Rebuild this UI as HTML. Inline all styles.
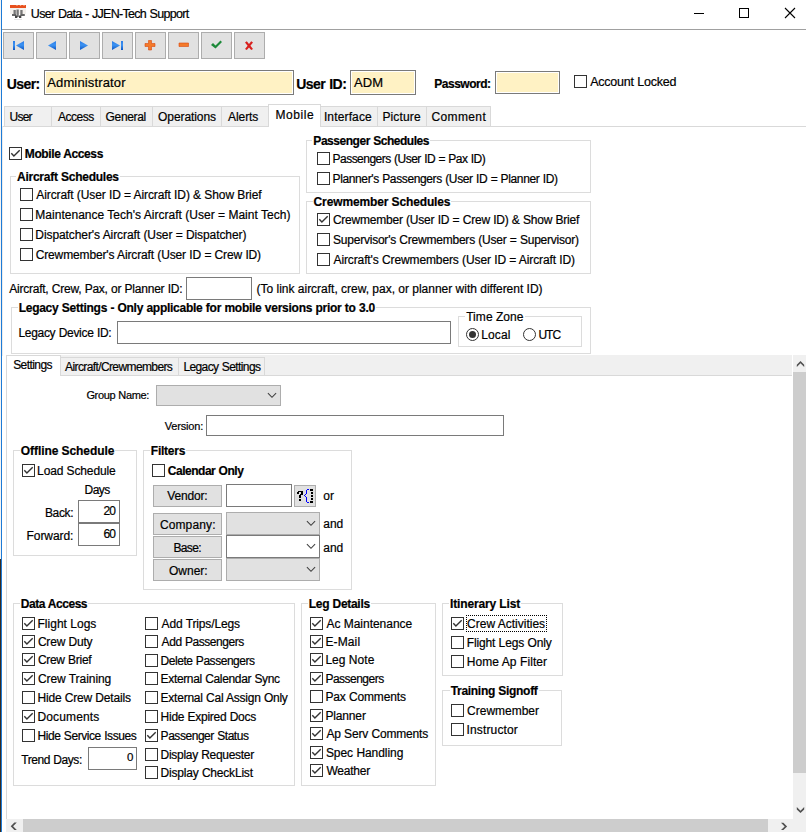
<!DOCTYPE html>
<html><head><meta charset="utf-8"><style>
html,body{margin:0;padding:0;}
body{width:806px;height:832px;overflow:hidden;position:relative;background:#fff;font-family:"Liberation Sans", sans-serif;}
.t{position:absolute;white-space:nowrap;font-family:"Liberation Sans", sans-serif;color:#000;-webkit-text-stroke:0.2px #000;}
</style></head><body>
<div style="position:absolute;left:0px;top:0px;width:1px;height:832px;box-sizing:border-box;background:#f4f4f4;"></div>
<div style="position:absolute;left:1px;top:0px;width:1px;height:832px;box-sizing:border-box;background:#1e7bd6;"></div>
<div style="position:absolute;left:0px;top:559px;width:1px;height:273px;box-sizing:border-box;background:#352b22;"></div>
<svg style="position:absolute;left:0;top:0" width="30" height="24">
<rect x="10" y="5" width="16" height="3" fill="#e8501e"/>
<path d="M16 5l1 1 1-1zM19.5 5l1 1 1-1zM23 5l1 1 1-1z" fill="#f7c0a0"/>
<rect x="10" y="8" width="16" height="6" fill="#f4f1ed"/>
<path d="M13.5 10h2.3v4h-2.3z M16.5 9.5h2.3v7.5h-2.3z M20.3 10h2.3v4h-2.3z" fill="#777"/>
<path d="M12 14h4v2h-4z M20.3 14h4.5v2h-4.5z" fill="#666"/>
<path d="M15 15.5h2.3v2.5h-2.3z M19 15.5h2.3v2.5h-2.3z" fill="#444"/>
<path d="M14 19h8v1h-8z" fill="#e6e6e6"/>
</svg>
<div class="t" style="left:30.82px;top:8px;font-size:12.5px;line-height:12.5px;color:#000;letter-spacing:-0.697px;word-spacing:0.697px;">User Data - JJEN-Tech Support</div>
<div style="position:absolute;left:694px;top:13px;width:10px;height:1px;box-sizing:border-box;background:#000;"></div>
<div style="position:absolute;left:739px;top:8px;width:10px;height:10px;box-sizing:border-box;border:1px solid #000;"></div>
<svg style="position:absolute;left:784px;top:7px" width="12" height="12"><path d="M1 1L11 11M11 1L1 11" stroke="#000" stroke-width="1.1"/></svg>
<div style="position:absolute;left:2px;top:29px;width:804px;height:1px;box-sizing:border-box;background:#a0a0a0;"></div>
<div style="position:absolute;left:3px;top:32px;width:31px;height:27px;box-sizing:border-box;border:1px solid #adadad;background:#e1e1e1;"></div>
<svg style="position:absolute;left:3px;top:32px" width="31" height="27"><defs><linearGradient id="bg" x1="0" y1="0" x2="0" y2="1"><stop offset="0" stop-color="#2a7ce8"/><stop offset="0.45" stop-color="#3d93f2"/><stop offset="1" stop-color="#0b55c4"/></linearGradient></defs><path d="M10 9h2v9h-2z M21 9v9l-8-4.5z" fill="url(#bg)"/></svg>
<div style="position:absolute;left:36px;top:32px;width:31px;height:27px;box-sizing:border-box;border:1px solid #adadad;background:#e1e1e1;"></div>
<svg style="position:absolute;left:36px;top:32px" width="31" height="27"><defs><linearGradient id="bg" x1="0" y1="0" x2="0" y2="1"><stop offset="0" stop-color="#2a7ce8"/><stop offset="0.45" stop-color="#3d93f2"/><stop offset="1" stop-color="#0b55c4"/></linearGradient></defs><path d="M20 9v9l-8-4.5z" fill="url(#bg)"/></svg>
<div style="position:absolute;left:69px;top:32px;width:31px;height:27px;box-sizing:border-box;border:1px solid #adadad;background:#e1e1e1;"></div>
<svg style="position:absolute;left:69px;top:32px" width="31" height="27"><defs><linearGradient id="bg" x1="0" y1="0" x2="0" y2="1"><stop offset="0" stop-color="#2a7ce8"/><stop offset="0.45" stop-color="#3d93f2"/><stop offset="1" stop-color="#0b55c4"/></linearGradient></defs><path d="M11 9v9l8-4.5z" fill="url(#bg)"/></svg>
<div style="position:absolute;left:102px;top:32px;width:31px;height:27px;box-sizing:border-box;border:1px solid #adadad;background:#e1e1e1;"></div>
<svg style="position:absolute;left:102px;top:32px" width="31" height="27"><defs><linearGradient id="bg" x1="0" y1="0" x2="0" y2="1"><stop offset="0" stop-color="#2a7ce8"/><stop offset="0.45" stop-color="#3d93f2"/><stop offset="1" stop-color="#0b55c4"/></linearGradient></defs><path d="M19 9h2v9h-2z M10 9v9l8-4.5z" fill="url(#bg)"/></svg>
<div style="position:absolute;left:135px;top:32px;width:31px;height:27px;box-sizing:border-box;border:1px solid #adadad;background:#e1e1e1;"></div>
<svg style="position:absolute;left:135px;top:32px" width="31" height="27"><defs><linearGradient id="bg" x1="0" y1="0" x2="0" y2="1"><stop offset="0" stop-color="#2a7ce8"/><stop offset="0.45" stop-color="#3d93f2"/><stop offset="1" stop-color="#0b55c4"/></linearGradient></defs><path d="M13.5 8.5h3v3h3.5v3h-3.5v3.5h-3v-3.5h-3.5v-3h3.5z" fill="#f47a2a" stroke="#d9480f" stroke-width="0.6"/></svg>
<div style="position:absolute;left:168px;top:32px;width:31px;height:27px;box-sizing:border-box;border:1px solid #adadad;background:#e1e1e1;"></div>
<svg style="position:absolute;left:168px;top:32px" width="31" height="27"><defs><linearGradient id="bg" x1="0" y1="0" x2="0" y2="1"><stop offset="0" stop-color="#2a7ce8"/><stop offset="0.45" stop-color="#3d93f2"/><stop offset="1" stop-color="#0b55c4"/></linearGradient></defs><path d="M11 11h9.5v3.5h-9.5z" fill="#f47a2a" stroke="#d9480f" stroke-width="0.6"/></svg>
<div style="position:absolute;left:201px;top:32px;width:31px;height:27px;box-sizing:border-box;border:1px solid #adadad;background:#e1e1e1;"></div>
<svg style="position:absolute;left:201px;top:32px" width="31" height="27"><defs><linearGradient id="bg" x1="0" y1="0" x2="0" y2="1"><stop offset="0" stop-color="#2a7ce8"/><stop offset="0.45" stop-color="#3d93f2"/><stop offset="1" stop-color="#0b55c4"/></linearGradient></defs><path d="M10 13l2-2 2.5 2.5 5-5 1.5 1.5-6.5 6.5z" fill="#1d8a3a"/></svg>
<div style="position:absolute;left:234px;top:32px;width:31px;height:27px;box-sizing:border-box;border:1px solid #adadad;background:#e1e1e1;"></div>
<svg style="position:absolute;left:234px;top:32px" width="31" height="27"><defs><linearGradient id="bg" x1="0" y1="0" x2="0" y2="1"><stop offset="0" stop-color="#2a7ce8"/><stop offset="0.45" stop-color="#3d93f2"/><stop offset="1" stop-color="#0b55c4"/></linearGradient></defs><path d="M11 10.5l1.8-1.2 2.2 2.7 2.2-2.7 1.8 1.2-2.6 3.2 2.6 3.2-1.8 1.2-2.2-2.7-2.2 2.7-1.8-1.2 2.6-3.2z" fill="#d8201e"/></svg>
<div class="t" style="left:6.65px;top:77px;font-size:14px;line-height:14px;font-weight:bold;color:#000;letter-spacing:-0.537px;word-spacing:0.537px;">User:</div>
<div style="position:absolute;left:44px;top:70px;width:250px;height:25px;box-sizing:border-box;border:1px solid #7a7a7a;background:#fff2c4;box-shadow:inset 0 0 0 1px #fff;"></div>
<div class="t" style="left:47.20px;top:76px;font-size:13px;line-height:13px;color:#000;letter-spacing:0.144px;word-spacing:-0.144px;">Administrator</div>
<div class="t" style="left:296.25px;top:77px;font-size:14px;line-height:14px;font-weight:bold;color:#000;letter-spacing:-0.521px;word-spacing:0.521px;">User ID:</div>
<div style="position:absolute;left:350px;top:70px;width:66px;height:25px;box-sizing:border-box;border:1px solid #7a7a7a;background:#fff2c4;box-shadow:inset 0 0 0 1px #fff;"></div>
<div class="t" style="left:354.00px;top:76px;font-size:13px;line-height:13px;color:#000;letter-spacing:0.125px;word-spacing:-0.125px;">ADM</div>
<div class="t" style="left:434.25px;top:78px;font-size:12px;line-height:12px;font-weight:bold;color:#000;letter-spacing:-0.484px;word-spacing:0.484px;">Password:</div>
<div style="position:absolute;left:495px;top:71px;width:65px;height:23px;box-sizing:border-box;border:1px solid #7a7a7a;background:#fff2c4;box-shadow:inset 0 0 0 1px #fff;"></div>
<div style="position:absolute;left:574px;top:75px;width:13px;height:13px"><svg width="13" height="13" style="position:absolute;left:0;top:0"><rect x="0.5" y="0.5" width="12" height="12" fill="#fff" stroke="#333"/></svg></div>
<div class="t" style="left:590.20px;top:76px;font-size:12.5px;line-height:12.5px;color:#000;letter-spacing:-0.227px;word-spacing:0.227px;">Account Locked</div>
<div style="position:absolute;left:2px;top:126px;width:804px;height:1px;box-sizing:border-box;background:#d9d9d9;"></div>
<div style="position:absolute;left:2px;top:126px;width:1px;height:230px;box-sizing:border-box;background:#ececec;"></div>
<div style="position:absolute;left:4px;top:106px;width:48px;height:21px;box-sizing:border-box;border:1px solid #d9d9d9;background:#f0f0f0;"></div>
<div class="t" style="left:9.53px;top:111px;font-size:12px;line-height:12px;color:#000;letter-spacing:-0.758px;word-spacing:0.758px;">User</div>
<div style="position:absolute;left:51px;top:106px;width:50px;height:21px;box-sizing:border-box;border:1px solid #d9d9d9;background:#f0f0f0;"></div>
<div class="t" style="left:58.00px;top:111px;font-size:12px;line-height:12px;color:#000;letter-spacing:-0.490px;word-spacing:0.490px;">Access</div>
<div style="position:absolute;left:100px;top:106px;width:53px;height:21px;box-sizing:border-box;border:1px solid #d9d9d9;background:#f0f0f0;"></div>
<div class="t" style="left:105.58px;top:111px;font-size:12px;line-height:12px;color:#000;letter-spacing:-0.342px;word-spacing:0.342px;">General</div>
<div style="position:absolute;left:152px;top:106px;width:70px;height:21px;box-sizing:border-box;border:1px solid #d9d9d9;background:#f0f0f0;"></div>
<div class="t" style="left:158.10px;top:111px;font-size:12px;line-height:12px;color:#000;letter-spacing:-0.086px;word-spacing:0.086px;">Operations</div>
<div style="position:absolute;left:221px;top:106px;width:48px;height:21px;box-sizing:border-box;border:1px solid #d9d9d9;background:#f0f0f0;"></div>
<div class="t" style="left:228.10px;top:111px;font-size:12px;line-height:12px;color:#000;letter-spacing:-0.090px;word-spacing:0.090px;">Alerts</div>
<div style="position:absolute;left:268px;top:104px;width:53px;height:23px;box-sizing:border-box;border:1px solid #d9d9d9;border-bottom:none;background:#fff;"></div>
<div class="t" style="left:275.50px;top:109px;font-size:12px;line-height:12px;color:#000;letter-spacing:0.550px;word-spacing:-0.550px;">Mobile</div>
<div style="position:absolute;left:320px;top:106px;width:58px;height:21px;box-sizing:border-box;border:1px solid #d9d9d9;background:#f0f0f0;"></div>
<div class="t" style="left:323.88px;top:111px;font-size:12px;line-height:12px;color:#000;letter-spacing:0.150px;word-spacing:-0.150px;">Interface</div>
<div style="position:absolute;left:377px;top:106px;width:50px;height:21px;box-sizing:border-box;border:1px solid #d9d9d9;background:#f0f0f0;"></div>
<div class="t" style="left:382.40px;top:111px;font-size:12px;line-height:12px;color:#000;letter-spacing:0.142px;word-spacing:-0.142px;">Picture</div>
<div style="position:absolute;left:426px;top:106px;width:65px;height:21px;box-sizing:border-box;border:1px solid #d9d9d9;background:#f0f0f0;"></div>
<div class="t" style="left:431.57px;top:111px;font-size:12px;line-height:12px;color:#000;letter-spacing:0.358px;word-spacing:-0.358px;">Comment</div>
<div style="position:absolute;left:9px;top:147px;width:13px;height:13px"><svg width="13" height="13" style="position:absolute;left:0;top:0"><rect x="0.5" y="0.5" width="12" height="12" fill="#fff" stroke="#333"/><polyline points="2.3,6.3 4.9,9.1 10.7,3.3" fill="none" stroke="#333" stroke-width="1.4"/></svg></div>
<div class="t" style="left:24.85px;top:148px;font-size:12px;line-height:12px;font-weight:bold;color:#000;letter-spacing:-0.405px;word-spacing:0.405px;">Mobile Access</div>
<div style="position:absolute;left:10px;top:176px;width:290px;height:98px;box-sizing:border-box;border:1px solid #dcdcdc;"></div>
<div class="t" style="left:17.05px;top:171px;font-size:12px;line-height:12px;font-weight:bold;color:#000;letter-spacing:-0.255px;word-spacing:0.255px;background:#fff;padding:0 1px 0 1px;margin-left:-1px;">Aircraft Schedules</div>
<div style="position:absolute;left:20px;top:188px;width:13px;height:13px"><svg width="13" height="13" style="position:absolute;left:0;top:0"><rect x="0.5" y="0.5" width="12" height="12" fill="#fff" stroke="#333"/></svg></div>
<div class="t" style="left:36.30px;top:189px;font-size:12px;line-height:12px;color:#000;letter-spacing:-0.106px;word-spacing:0.106px;">Aircraft (User ID = Aircraft ID) &amp; Show Brief</div>
<div style="position:absolute;left:20px;top:208px;width:13px;height:13px"><svg width="13" height="13" style="position:absolute;left:0;top:0"><rect x="0.5" y="0.5" width="12" height="12" fill="#fff" stroke="#333"/></svg></div>
<div class="t" style="left:35.30px;top:209px;font-size:12px;line-height:12px;color:#000;letter-spacing:0.020px;word-spacing:-0.020px;">Maintenance Tech's Aircraft (User = Maint Tech)</div>
<div style="position:absolute;left:20px;top:228px;width:13px;height:13px"><svg width="13" height="13" style="position:absolute;left:0;top:0"><rect x="0.5" y="0.5" width="12" height="12" fill="#fff" stroke="#333"/></svg></div>
<div class="t" style="left:35.30px;top:229px;font-size:12px;line-height:12px;color:#000;letter-spacing:-0.079px;word-spacing:0.079px;">Dispatcher's Aircraft (User = Dispatcher)</div>
<div style="position:absolute;left:20px;top:248px;width:13px;height:13px"><svg width="13" height="13" style="position:absolute;left:0;top:0"><rect x="0.5" y="0.5" width="12" height="12" fill="#fff" stroke="#333"/></svg></div>
<div class="t" style="left:35.67px;top:249px;font-size:12px;line-height:12px;color:#000;letter-spacing:-0.133px;word-spacing:0.133px;">Crewmember's Aircraft (User ID = Crew ID)</div>
<div style="position:absolute;left:306px;top:140px;width:285px;height:53px;box-sizing:border-box;border:1px solid #dcdcdc;"></div>
<div class="t" style="left:313.35px;top:135px;font-size:12px;line-height:12px;font-weight:bold;color:#000;letter-spacing:-0.469px;word-spacing:0.469px;background:#fff;padding:0 1px 0 1px;margin-left:-1px;">Passenger Schedules</div>
<div style="position:absolute;left:317px;top:152px;width:13px;height:13px"><svg width="13" height="13" style="position:absolute;left:0;top:0"><rect x="0.5" y="0.5" width="12" height="12" fill="#fff" stroke="#333"/></svg></div>
<div class="t" style="left:332.50px;top:153px;font-size:12px;line-height:12px;color:#000;letter-spacing:-0.515px;word-spacing:0.515px;">Passengers (User ID = Pax ID)</div>
<div style="position:absolute;left:317px;top:172px;width:13px;height:13px"><svg width="13" height="13" style="position:absolute;left:0;top:0"><rect x="0.5" y="0.5" width="12" height="12" fill="#fff" stroke="#333"/></svg></div>
<div class="t" style="left:332.50px;top:173px;font-size:12px;line-height:12px;color:#000;letter-spacing:-0.367px;word-spacing:0.367px;">Planner's Passengers (User ID = Planner ID)</div>
<div style="position:absolute;left:306px;top:201px;width:285px;height:73px;box-sizing:border-box;border:1px solid #dcdcdc;"></div>
<div class="t" style="left:313.60px;top:196px;font-size:12px;line-height:12px;font-weight:bold;color:#000;letter-spacing:-0.139px;word-spacing:0.139px;background:#fff;padding:0 1px 0 1px;margin-left:-1px;">Crewmember Schedules</div>
<div style="position:absolute;left:317px;top:213px;width:13px;height:13px"><svg width="13" height="13" style="position:absolute;left:0;top:0"><rect x="0.5" y="0.5" width="12" height="12" fill="#fff" stroke="#333"/><polyline points="2.3,6.3 4.9,9.1 10.7,3.3" fill="none" stroke="#333" stroke-width="1.4"/></svg></div>
<div class="t" style="left:332.88px;top:214px;font-size:12px;line-height:12px;color:#000;letter-spacing:-0.215px;word-spacing:0.215px;">Crewmember (User ID = Crew ID) &amp; Show Brief</div>
<div style="position:absolute;left:317px;top:233px;width:13px;height:13px"><svg width="13" height="13" style="position:absolute;left:0;top:0"><rect x="0.5" y="0.5" width="12" height="12" fill="#fff" stroke="#333"/></svg></div>
<div class="t" style="left:333.00px;top:234px;font-size:12px;line-height:12px;color:#000;letter-spacing:-0.221px;word-spacing:0.221px;">Supervisor's Crewmembers (User = Supervisor)</div>
<div style="position:absolute;left:317px;top:253px;width:13px;height:13px"><svg width="13" height="13" style="position:absolute;left:0;top:0"><rect x="0.5" y="0.5" width="12" height="12" fill="#fff" stroke="#333"/></svg></div>
<div class="t" style="left:333.50px;top:254px;font-size:12px;line-height:12px;color:#000;letter-spacing:-0.114px;word-spacing:0.114px;">Aircraft's Crewmembers (User ID = Aircraft ID)</div>
<div class="t" style="left:9.20px;top:283px;font-size:12px;line-height:12px;color:#000;letter-spacing:-0.231px;word-spacing:0.231px;">Aircraft, Crew, Pax, or Planner ID:</div>
<div style="position:absolute;left:186px;top:277px;width:66px;height:23px;box-sizing:border-box;border:1px solid #7a7a7a;background:#fff;"></div>
<div class="t" style="left:256.55px;top:283px;font-size:12px;line-height:12px;color:#000;letter-spacing:-0.011px;word-spacing:0.011px;">(To link aircraft, crew, pax, or planner with different ID)</div>
<div style="position:absolute;left:11px;top:307px;width:580px;height:47px;box-sizing:border-box;border:1px solid #dcdcdc;"></div>
<div class="t" style="left:18.65px;top:302px;font-size:12px;line-height:12px;font-weight:bold;color:#000;letter-spacing:-0.259px;word-spacing:0.259px;background:#fff;padding:0 1px 0 1px;margin-left:-1px;">Legacy Settings - Only applicable for mobile versions prior to 3.0</div>
<div class="t" style="left:18.40px;top:327px;font-size:12px;line-height:12px;color:#000;letter-spacing:-0.296px;word-spacing:0.296px;">Legacy Device ID:</div>
<div style="position:absolute;left:117px;top:321px;width:334px;height:23px;box-sizing:border-box;border:1px solid #7a7a7a;background:#fff;"></div>
<div style="position:absolute;left:458px;top:316px;width:124px;height:31px;box-sizing:border-box;border:1px solid #dcdcdc;"></div>
<div class="t" style="left:466.15px;top:311px;font-size:12px;line-height:12px;color:#000;letter-spacing:0.068px;word-spacing:-0.068px;background:#fff;padding:0 1px 0 1px;margin-left:-1px;">Time Zone</div>
<svg style="position:absolute;left:466px;top:328px" width="13" height="13"><circle cx="6.5" cy="6.5" r="6" fill="#fff" stroke="#333"/><circle cx="6.5" cy="6.5" r="3.5" fill="#333"/></svg>
<div class="t" style="left:481.30px;top:329px;font-size:12px;line-height:12px;color:#000;letter-spacing:0.081px;word-spacing:-0.081px;">Local</div>
<svg style="position:absolute;left:523px;top:328px" width="13" height="13"><circle cx="6.5" cy="6.5" r="6" fill="#fff" stroke="#333"/></svg>
<div class="t" style="left:538.42px;top:329px;font-size:12px;line-height:12px;color:#000;letter-spacing:-0.987px;word-spacing:0.987px;">UTC</div>
<div style="position:absolute;left:6px;top:355px;width:786px;height:20px;box-sizing:border-box;background:#f0f0f0;"></div>
<div style="position:absolute;left:6px;top:375px;width:786px;height:1px;box-sizing:border-box;background:#d9d9d9;"></div>
<div style="position:absolute;left:6px;top:375px;width:1px;height:444px;box-sizing:border-box;background:#d9d9d9;"></div>
<div style="position:absolute;left:60px;top:357px;width:119px;height:19px;box-sizing:border-box;border:1px solid #d9d9d9;background:#f0f0f0;"></div>
<div class="t" style="left:65.10px;top:361px;font-size:12px;line-height:12px;color:#000;letter-spacing:-0.611px;word-spacing:0.611px;">Aircraft/Crewmembers</div>
<div style="position:absolute;left:178px;top:357px;width:87px;height:19px;box-sizing:border-box;border:1px solid #d9d9d9;background:#f0f0f0;"></div>
<div class="t" style="left:183.40px;top:361px;font-size:12px;line-height:12px;color:#000;letter-spacing:-0.600px;word-spacing:0.600px;">Legacy Settings</div>
<div style="position:absolute;left:6px;top:355px;width:55px;height:21px;box-sizing:border-box;border:1px solid #d9d9d9;border-bottom:none;background:#fff;"></div>
<div class="t" style="left:13.20px;top:359px;font-size:12px;line-height:12px;color:#000;letter-spacing:-0.571px;word-spacing:0.571px;">Settings</div>
<div style="position:absolute;left:793px;top:355px;width:13px;height:464px;box-sizing:border-box;background:#f0f0f0;"></div>
<div style="position:absolute;left:793px;top:372px;width:13px;height:401px;box-sizing:border-box;background:#cdcdcd;"></div>
<div style="position:absolute;left:6px;top:819px;width:800px;height:13px;box-sizing:border-box;background:#f0f0f0;"></div>
<div style="position:absolute;left:23px;top:819px;width:745px;height:13px;box-sizing:border-box;background:#cdcdcd;"></div>
<svg style="position:absolute;left:0;top:0" width="806" height="832"><g fill="#505050"><polygon points="800.5,361 804.2,364.7 804.2,367 800.5,363.3 796.8,367 796.8,364.7"/><polygon points="800.5,813.1 804.2,809.4 804.2,807 800.5,810.7 796.8,807 796.8,809.4"/><polygon points="787.1,826.4 783.4,822.8 781,822.8 784.7,826.4 781,830 783.4,830"/><polygon points="10.7,826.3 14.4,822.6 16.8,822.6 13.1,826.3 16.8,830 14.4,830"/></g></svg>
<div class="t" style="left:86.40px;top:390px;font-size:11px;line-height:11px;color:#000;letter-spacing:-0.336px;word-spacing:0.336px;">Group Name:</div>
<div style="position:absolute;left:156px;top:385px;width:125px;height:21px;box-sizing:border-box;border:1px solid #adadad;background:#e1e1e1;"></div>
<svg style="position:absolute;left:267px;top:392.0px" width="10" height="7"><polyline points="0.9,1.2 5,5.3 9.1,1.2" fill="none" stroke="#404040" stroke-width="1.1"/></svg>
<div class="t" style="left:164.80px;top:421px;font-size:11px;line-height:11px;color:#000;letter-spacing:-0.182px;word-spacing:0.182px;">Version:</div>
<div style="position:absolute;left:206px;top:415px;width:298px;height:21px;box-sizing:border-box;border:1px solid #7a7a7a;background:#fff;"></div>
<div style="position:absolute;left:13px;top:450px;width:124px;height:106px;box-sizing:border-box;border:1px solid #dcdcdc;"></div>
<div class="t" style="left:20.80px;top:445px;font-size:12px;line-height:12px;font-weight:bold;color:#000;letter-spacing:-0.082px;word-spacing:0.082px;background:#fff;padding:0 1px 0 1px;margin-left:-1px;">Offline Schedule</div>
<div style="position:absolute;left:22px;top:464px;width:13px;height:13px"><svg width="13" height="13" style="position:absolute;left:0;top:0"><rect x="0.5" y="0.5" width="12" height="12" fill="#fff" stroke="#333"/><polyline points="2.3,6.3 4.9,9.1 10.7,3.3" fill="none" stroke="#333" stroke-width="1.4"/></svg></div>
<div class="t" style="left:37.10px;top:465px;font-size:12px;line-height:12px;color:#000;letter-spacing:-0.136px;word-spacing:0.136px;">Load Schedule</div>
<div class="t" style="left:84.50px;top:484px;font-size:12px;line-height:12px;color:#000;letter-spacing:-0.533px;word-spacing:0.533px;">Days</div>
<div class="t" style="left:44.90px;top:507px;font-size:12px;line-height:12px;color:#000;letter-spacing:-0.319px;word-spacing:0.319px;">Back:</div>
<div class="t" style="left:26.50px;top:530px;font-size:12px;line-height:12px;color:#000;letter-spacing:-0.064px;word-spacing:0.064px;">Forward:</div>
<div style="position:absolute;left:78px;top:500px;width:42px;height:23px;box-sizing:border-box;border:1px solid #7a7a7a;background:#fff;"></div>
<div class="t" style="left:103.58px;top:505px;font-size:12px;line-height:12px;color:#000;letter-spacing:-0.950px;word-spacing:0.950px;">20</div>
<div style="position:absolute;left:78px;top:523px;width:42px;height:23px;box-sizing:border-box;border:1px solid #7a7a7a;background:#fff;"></div>
<div class="t" style="left:103.58px;top:528px;font-size:12px;line-height:12px;color:#000;letter-spacing:-0.950px;word-spacing:0.950px;">60</div>
<div style="position:absolute;left:143px;top:450px;width:209px;height:140px;box-sizing:border-box;border:1px solid #dcdcdc;"></div>
<div class="t" style="left:150.85px;top:445px;font-size:12px;line-height:12px;font-weight:bold;color:#000;letter-spacing:-0.246px;word-spacing:0.246px;background:#fff;padding:0 1px 0 1px;margin-left:-1px;">Filters</div>
<div style="position:absolute;left:152px;top:464px;width:13px;height:13px"><svg width="13" height="13" style="position:absolute;left:0;top:0"><rect x="0.5" y="0.5" width="12" height="12" fill="#fff" stroke="#333"/></svg></div>
<div class="t" style="left:167.80px;top:465px;font-size:12px;line-height:12px;font-weight:bold;color:#000;letter-spacing:-0.486px;word-spacing:0.486px;">Calendar Only</div>
<div style="position:absolute;left:153px;top:485px;width:69px;height:22px;box-sizing:border-box;border:1px solid #adadad;background:#e1e1e1;"></div>
<div class="t" style="left:167.30px;top:490px;font-size:12px;line-height:12px;color:#000;letter-spacing:-0.175px;word-spacing:0.175px;">Vendor:</div>
<div style="position:absolute;left:226px;top:484px;width:66px;height:23px;box-sizing:border-box;border:1px solid #7a7a7a;background:#fff;"></div>
<div style="position:absolute;left:294px;top:485px;width:22px;height:22px;box-sizing:border-box;border:1px solid #adadad;background:#e1e1e1;"></div>
<svg style="position:absolute;left:0;top:0" width="806" height="832" shape-rendering="crispEdges"><g fill="#000"><rect x="298" y="491" width="4" height="1"/><rect x="297" y="492" width="2" height="2"/><rect x="301" y="491" width="2" height="4"/><rect x="300" y="494" width="2" height="1"/><rect x="299" y="495" width="2" height="3"/><rect x="299" y="499" width="2" height="2"/><rect x="310" y="489" width="3" height="2"/><rect x="311" y="492" width="2" height="2"/><rect x="311" y="495" width="2" height="2"/><rect x="311" y="498" width="2" height="2"/><rect x="310" y="501" width="3" height="2"/></g><g fill="#0000ff"><rect x="307" y="489" width="2" height="1"/><rect x="306" y="490" width="1" height="4"/><rect x="305" y="494" width="1" height="1"/><rect x="304" y="495" width="1" height="1"/><rect x="305" y="496" width="1" height="1"/><rect x="306" y="497" width="1" height="5"/><rect x="307" y="502" width="2" height="1"/></g></svg>
<div class="t" style="left:323.20px;top:490px;font-size:12px;line-height:12px;color:#000;letter-spacing:0.100px;word-spacing:-0.100px;">or</div>
<div style="position:absolute;left:153px;top:513px;width:69px;height:22px;box-sizing:border-box;border:1px solid #adadad;background:#e1e1e1;"></div>
<div class="t" style="left:159.88px;top:519px;font-size:12px;line-height:12px;color:#000;letter-spacing:0.129px;word-spacing:-0.129px;">Company:</div>
<div style="position:absolute;left:226px;top:512px;width:94px;height:23px;box-sizing:border-box;border:1px solid #adadad;background:#e1e1e1;"></div>
<svg style="position:absolute;left:306px;top:520.0px" width="10" height="7"><polyline points="0.9,1.2 5,5.3 9.1,1.2" fill="none" stroke="#404040" stroke-width="1.1"/></svg>
<div class="t" style="left:323.20px;top:518px;font-size:12px;line-height:12px;color:#000;letter-spacing:0.025px;word-spacing:-0.025px;">and</div>
<div style="position:absolute;left:153px;top:536px;width:69px;height:22px;box-sizing:border-box;border:1px solid #adadad;background:#e1e1e1;"></div>
<div class="t" style="left:173.50px;top:542px;font-size:12px;line-height:12px;color:#000;letter-spacing:-0.656px;word-spacing:0.656px;">Base:</div>
<div style="position:absolute;left:226px;top:535px;width:94px;height:23px;box-sizing:border-box;border:1px solid #7a7a7a;background:#fff;"></div>
<svg style="position:absolute;left:306px;top:543.0px" width="10" height="7"><polyline points="0.9,1.2 5,5.3 9.1,1.2" fill="none" stroke="#404040" stroke-width="1.1"/></svg>
<div class="t" style="left:323.20px;top:542px;font-size:12px;line-height:12px;color:#000;letter-spacing:0.025px;word-spacing:-0.025px;">and</div>
<div style="position:absolute;left:153px;top:559px;width:69px;height:22px;box-sizing:border-box;border:1px solid #adadad;background:#e1e1e1;"></div>
<div class="t" style="left:169.00px;top:565px;font-size:12px;line-height:12px;color:#000;letter-spacing:-0.005px;word-spacing:0.005px;">Owner:</div>
<div style="position:absolute;left:226px;top:558px;width:94px;height:23px;box-sizing:border-box;border:1px solid #adadad;background:#e1e1e1;"></div>
<svg style="position:absolute;left:306px;top:566.0px" width="10" height="7"><polyline points="0.9,1.2 5,5.3 9.1,1.2" fill="none" stroke="#404040" stroke-width="1.1"/></svg>
<div style="position:absolute;left:13px;top:603px;width:282px;height:183px;box-sizing:border-box;border:1px solid #dcdcdc;"></div>
<div class="t" style="left:20.85px;top:598px;font-size:12px;line-height:12px;font-weight:bold;color:#000;letter-spacing:-0.472px;word-spacing:0.472px;background:#fff;padding:0 1px 0 1px;margin-left:-1px;">Data Access</div>
<div style="position:absolute;left:22px;top:617px;width:13px;height:13px"><svg width="13" height="13" style="position:absolute;left:0;top:0"><rect x="0.5" y="0.5" width="12" height="12" fill="#fff" stroke="#333"/><polyline points="2.3,6.3 4.9,9.1 10.7,3.3" fill="none" stroke="#333" stroke-width="1.4"/></svg></div>
<div class="t" style="left:37.50px;top:618px;font-size:12px;line-height:12px;color:#000;letter-spacing:0.014px;word-spacing:-0.014px;">Flight Logs</div>
<div style="position:absolute;left:22px;top:635px;width:13px;height:13px"><svg width="13" height="13" style="position:absolute;left:0;top:0"><rect x="0.5" y="0.5" width="12" height="12" fill="#fff" stroke="#333"/><polyline points="2.3,6.3 4.9,9.1 10.7,3.3" fill="none" stroke="#333" stroke-width="1.4"/></svg></div>
<div class="t" style="left:37.88px;top:636px;font-size:12px;line-height:12px;color:#000;letter-spacing:-0.182px;word-spacing:0.182px;">Crew Duty</div>
<div style="position:absolute;left:22px;top:653px;width:13px;height:13px"><svg width="13" height="13" style="position:absolute;left:0;top:0"><rect x="0.5" y="0.5" width="12" height="12" fill="#fff" stroke="#333"/><polyline points="2.3,6.3 4.9,9.1 10.7,3.3" fill="none" stroke="#333" stroke-width="1.4"/></svg></div>
<div class="t" style="left:37.88px;top:654px;font-size:12px;line-height:12px;color:#000;letter-spacing:-0.284px;word-spacing:0.284px;">Crew Brief</div>
<div style="position:absolute;left:22px;top:672px;width:13px;height:13px"><svg width="13" height="13" style="position:absolute;left:0;top:0"><rect x="0.5" y="0.5" width="12" height="12" fill="#fff" stroke="#333"/><polyline points="2.3,6.3 4.9,9.1 10.7,3.3" fill="none" stroke="#333" stroke-width="1.4"/></svg></div>
<div class="t" style="left:37.88px;top:673px;font-size:12px;line-height:12px;color:#000;letter-spacing:-0.057px;word-spacing:0.057px;">Crew Training</div>
<div style="position:absolute;left:22px;top:691px;width:13px;height:13px"><svg width="13" height="13" style="position:absolute;left:0;top:0"><rect x="0.5" y="0.5" width="12" height="12" fill="#fff" stroke="#333"/></svg></div>
<div class="t" style="left:37.50px;top:692px;font-size:12px;line-height:12px;color:#000;letter-spacing:-0.188px;word-spacing:0.188px;">Hide Crew Details</div>
<div style="position:absolute;left:22px;top:710px;width:13px;height:13px"><svg width="13" height="13" style="position:absolute;left:0;top:0"><rect x="0.5" y="0.5" width="12" height="12" fill="#fff" stroke="#333"/><polyline points="2.3,6.3 4.9,9.1 10.7,3.3" fill="none" stroke="#333" stroke-width="1.4"/></svg></div>
<div class="t" style="left:37.50px;top:711px;font-size:12px;line-height:12px;color:#000;letter-spacing:0.128px;word-spacing:-0.128px;">Documents</div>
<div style="position:absolute;left:22px;top:729px;width:13px;height:13px"><svg width="13" height="13" style="position:absolute;left:0;top:0"><rect x="0.5" y="0.5" width="12" height="12" fill="#fff" stroke="#333"/></svg></div>
<div class="t" style="left:37.50px;top:730px;font-size:12px;line-height:12px;color:#000;letter-spacing:-0.427px;word-spacing:0.427px;">Hide Service Issues</div>
<div class="t" style="left:21.25px;top:754px;font-size:12px;line-height:12px;color:#000;letter-spacing:-0.436px;word-spacing:0.436px;">Trend Days:</div>
<div style="position:absolute;left:88px;top:747px;width:49px;height:23px;box-sizing:border-box;border:1px solid #7a7a7a;background:#fff;"></div>
<div class="t" style="left:126.90px;top:752.25px;font-size:11.5px;line-height:11.5px;color:#000;letter-spacing:-0.200px;word-spacing:0.200px;">0</div>
<div style="position:absolute;left:145px;top:617px;width:13px;height:13px"><svg width="13" height="13" style="position:absolute;left:0;top:0"><rect x="0.5" y="0.5" width="12" height="12" fill="#fff" stroke="#333"/></svg></div>
<div class="t" style="left:161.60px;top:618px;font-size:12px;line-height:12px;color:#000;letter-spacing:-0.135px;word-spacing:0.135px;">Add Trips/Legs</div>
<div style="position:absolute;left:145px;top:635px;width:13px;height:13px"><svg width="13" height="13" style="position:absolute;left:0;top:0"><rect x="0.5" y="0.5" width="12" height="12" fill="#fff" stroke="#333"/></svg></div>
<div class="t" style="left:161.60px;top:636px;font-size:12px;line-height:12px;color:#000;letter-spacing:-0.444px;word-spacing:0.444px;">Add Passengers</div>
<div style="position:absolute;left:145px;top:654px;width:13px;height:13px"><svg width="13" height="13" style="position:absolute;left:0;top:0"><rect x="0.5" y="0.5" width="12" height="12" fill="#fff" stroke="#333"/></svg></div>
<div class="t" style="left:160.60px;top:655px;font-size:12px;line-height:12px;color:#000;letter-spacing:-0.460px;word-spacing:0.460px;">Delete Passengers</div>
<div style="position:absolute;left:145px;top:672px;width:13px;height:13px"><svg width="13" height="13" style="position:absolute;left:0;top:0"><rect x="0.5" y="0.5" width="12" height="12" fill="#fff" stroke="#333"/></svg></div>
<div class="t" style="left:160.60px;top:673px;font-size:12px;line-height:12px;color:#000;letter-spacing:-0.346px;word-spacing:0.346px;">External Calendar Sync</div>
<div style="position:absolute;left:145px;top:691px;width:13px;height:13px"><svg width="13" height="13" style="position:absolute;left:0;top:0"><rect x="0.5" y="0.5" width="12" height="12" fill="#fff" stroke="#333"/></svg></div>
<div class="t" style="left:160.60px;top:692px;font-size:12px;line-height:12px;color:#000;letter-spacing:-0.240px;word-spacing:0.240px;">External Cal Assign Only</div>
<div style="position:absolute;left:145px;top:710px;width:13px;height:13px"><svg width="13" height="13" style="position:absolute;left:0;top:0"><rect x="0.5" y="0.5" width="12" height="12" fill="#fff" stroke="#333"/></svg></div>
<div class="t" style="left:160.60px;top:711px;font-size:12px;line-height:12px;color:#000;letter-spacing:-0.271px;word-spacing:0.271px;">Hide Expired Docs</div>
<div style="position:absolute;left:145px;top:729px;width:13px;height:13px"><svg width="13" height="13" style="position:absolute;left:0;top:0"><rect x="0.5" y="0.5" width="12" height="12" fill="#fff" stroke="#333"/><polyline points="2.3,6.3 4.9,9.1 10.7,3.3" fill="none" stroke="#333" stroke-width="1.4"/></svg></div>
<div class="t" style="left:160.60px;top:730px;font-size:12px;line-height:12px;color:#000;letter-spacing:-0.455px;word-spacing:0.455px;">Passenger Status</div>
<div style="position:absolute;left:145px;top:748px;width:13px;height:13px"><svg width="13" height="13" style="position:absolute;left:0;top:0"><rect x="0.5" y="0.5" width="12" height="12" fill="#fff" stroke="#333"/></svg></div>
<div class="t" style="left:160.60px;top:749px;font-size:12px;line-height:12px;color:#000;letter-spacing:-0.298px;word-spacing:0.298px;">Display Requester</div>
<div style="position:absolute;left:145px;top:766px;width:13px;height:13px"><svg width="13" height="13" style="position:absolute;left:0;top:0"><rect x="0.5" y="0.5" width="12" height="12" fill="#fff" stroke="#333"/></svg></div>
<div class="t" style="left:160.60px;top:767px;font-size:12px;line-height:12px;color:#000;letter-spacing:-0.197px;word-spacing:0.197px;">Display CheckList</div>
<div style="position:absolute;left:301px;top:603px;width:135px;height:183px;box-sizing:border-box;border:1px solid #dcdcdc;"></div>
<div class="t" style="left:308.85px;top:598px;font-size:12px;line-height:12px;font-weight:bold;color:#000;letter-spacing:-0.308px;word-spacing:0.308px;background:#fff;padding:0 1px 0 1px;margin-left:-1px;">Leg Details</div>
<div style="position:absolute;left:310px;top:617px;width:13px;height:13px"><svg width="13" height="13" style="position:absolute;left:0;top:0"><rect x="0.5" y="0.5" width="12" height="12" fill="#fff" stroke="#333"/><polyline points="2.3,6.3 4.9,9.1 10.7,3.3" fill="none" stroke="#333" stroke-width="1.4"/></svg></div>
<div class="t" style="left:326.40px;top:618px;font-size:12px;line-height:12px;color:#000;letter-spacing:-0.017px;word-spacing:0.017px;">Ac Maintenance</div>
<div style="position:absolute;left:310px;top:635px;width:13px;height:13px"><svg width="13" height="13" style="position:absolute;left:0;top:0"><rect x="0.5" y="0.5" width="12" height="12" fill="#fff" stroke="#333"/><polyline points="2.3,6.3 4.9,9.1 10.7,3.3" fill="none" stroke="#333" stroke-width="1.4"/></svg></div>
<div class="t" style="left:325.40px;top:636px;font-size:12px;line-height:12px;color:#000;letter-spacing:0.130px;word-spacing:-0.130px;">E-Mail</div>
<div style="position:absolute;left:310px;top:653px;width:13px;height:13px"><svg width="13" height="13" style="position:absolute;left:0;top:0"><rect x="0.5" y="0.5" width="12" height="12" fill="#fff" stroke="#333"/><polyline points="2.3,6.3 4.9,9.1 10.7,3.3" fill="none" stroke="#333" stroke-width="1.4"/></svg></div>
<div class="t" style="left:325.40px;top:654px;font-size:12px;line-height:12px;color:#000;letter-spacing:0.038px;word-spacing:-0.038px;">Leg Note</div>
<div style="position:absolute;left:310px;top:672px;width:13px;height:13px"><svg width="13" height="13" style="position:absolute;left:0;top:0"><rect x="0.5" y="0.5" width="12" height="12" fill="#fff" stroke="#333"/><polyline points="2.3,6.3 4.9,9.1 10.7,3.3" fill="none" stroke="#333" stroke-width="1.4"/></svg></div>
<div class="t" style="left:325.40px;top:673px;font-size:12px;line-height:12px;color:#000;letter-spacing:-0.511px;word-spacing:0.511px;">Passengers</div>
<div style="position:absolute;left:310px;top:690px;width:13px;height:13px"><svg width="13" height="13" style="position:absolute;left:0;top:0"><rect x="0.5" y="0.5" width="12" height="12" fill="#fff" stroke="#333"/></svg></div>
<div class="t" style="left:325.40px;top:691px;font-size:12px;line-height:12px;color:#000;letter-spacing:-0.152px;word-spacing:0.152px;">Pax Comments</div>
<div style="position:absolute;left:310px;top:709px;width:13px;height:13px"><svg width="13" height="13" style="position:absolute;left:0;top:0"><rect x="0.5" y="0.5" width="12" height="12" fill="#fff" stroke="#333"/><polyline points="2.3,6.3 4.9,9.1 10.7,3.3" fill="none" stroke="#333" stroke-width="1.4"/></svg></div>
<div class="t" style="left:325.40px;top:710px;font-size:12px;line-height:12px;color:#000;letter-spacing:-0.142px;word-spacing:0.142px;">Planner</div>
<div style="position:absolute;left:310px;top:727px;width:13px;height:13px"><svg width="13" height="13" style="position:absolute;left:0;top:0"><rect x="0.5" y="0.5" width="12" height="12" fill="#fff" stroke="#333"/><polyline points="2.3,6.3 4.9,9.1 10.7,3.3" fill="none" stroke="#333" stroke-width="1.4"/></svg></div>
<div class="t" style="left:326.40px;top:728px;font-size:12px;line-height:12px;color:#000;letter-spacing:-0.171px;word-spacing:0.171px;">Ap Serv Comments</div>
<div style="position:absolute;left:310px;top:746px;width:13px;height:13px"><svg width="13" height="13" style="position:absolute;left:0;top:0"><rect x="0.5" y="0.5" width="12" height="12" fill="#fff" stroke="#333"/><polyline points="2.3,6.3 4.9,9.1 10.7,3.3" fill="none" stroke="#333" stroke-width="1.4"/></svg></div>
<div class="t" style="left:325.90px;top:747px;font-size:12px;line-height:12px;color:#000;letter-spacing:-0.050px;word-spacing:0.050px;">Spec Handling</div>
<div style="position:absolute;left:310px;top:764px;width:13px;height:13px"><svg width="13" height="13" style="position:absolute;left:0;top:0"><rect x="0.5" y="0.5" width="12" height="12" fill="#fff" stroke="#333"/><polyline points="2.3,6.3 4.9,9.1 10.7,3.3" fill="none" stroke="#333" stroke-width="1.4"/></svg></div>
<div class="t" style="left:326.40px;top:765px;font-size:12px;line-height:12px;color:#000;letter-spacing:-0.217px;word-spacing:0.217px;">Weather</div>
<div style="position:absolute;left:442px;top:603px;width:121px;height:73px;box-sizing:border-box;border:1px solid #dcdcdc;"></div>
<div class="t" style="left:450.05px;top:598px;font-size:12px;line-height:12px;font-weight:bold;color:#000;letter-spacing:-0.160px;word-spacing:0.160px;background:#fff;padding:0 1px 0 1px;margin-left:-1px;">Itinerary List</div>
<div style="position:absolute;left:451px;top:617px;width:13px;height:13px"><svg width="13" height="13" style="position:absolute;left:0;top:0"><rect x="0.5" y="0.5" width="12" height="12" fill="#fff" stroke="#333"/><polyline points="2.3,6.3 4.9,9.1 10.7,3.3" fill="none" stroke="#333" stroke-width="1.4"/></svg></div>
<div class="t" style="left:467.07px;top:618px;font-size:12px;line-height:12px;color:#000;letter-spacing:0.000px;word-spacing:-0.000px;">Crew Activities</div>
<div style="position:absolute;left:466px;top:615px;width:81px;height:17px;box-sizing:border-box;border:1px dotted #000;"></div>
<div style="position:absolute;left:451px;top:636px;width:13px;height:13px"><svg width="13" height="13" style="position:absolute;left:0;top:0"><rect x="0.5" y="0.5" width="12" height="12" fill="#fff" stroke="#333"/></svg></div>
<div class="t" style="left:466.70px;top:637px;font-size:12px;line-height:12px;color:#000;letter-spacing:-0.127px;word-spacing:0.127px;">Flight Legs Only</div>
<div style="position:absolute;left:451px;top:655px;width:13px;height:13px"><svg width="13" height="13" style="position:absolute;left:0;top:0"><rect x="0.5" y="0.5" width="12" height="12" fill="#fff" stroke="#333"/></svg></div>
<div class="t" style="left:466.70px;top:656px;font-size:12px;line-height:12px;color:#000;letter-spacing:0.095px;word-spacing:-0.095px;">Home Ap Filter</div>
<div style="position:absolute;left:442px;top:690px;width:120px;height:56px;box-sizing:border-box;border:1px solid #dcdcdc;"></div>
<div class="t" style="left:450.68px;top:685px;font-size:12px;line-height:12px;font-weight:bold;color:#000;letter-spacing:-0.296px;word-spacing:0.296px;background:#fff;padding:0 1px 0 1px;margin-left:-1px;">Training Signoff</div>
<div style="position:absolute;left:451px;top:704px;width:13px;height:13px"><svg width="13" height="13" style="position:absolute;left:0;top:0"><rect x="0.5" y="0.5" width="12" height="12" fill="#fff" stroke="#333"/></svg></div>
<div class="t" style="left:467.07px;top:705px;font-size:12px;line-height:12px;color:#000;letter-spacing:-0.006px;word-spacing:0.006px;">Crewmember</div>
<div style="position:absolute;left:451px;top:723px;width:13px;height:13px"><svg width="13" height="13" style="position:absolute;left:0;top:0"><rect x="0.5" y="0.5" width="12" height="12" fill="#fff" stroke="#333"/></svg></div>
<div class="t" style="left:466.57px;top:724px;font-size:12px;line-height:12px;color:#000;letter-spacing:0.139px;word-spacing:-0.139px;">Instructor</div>
</body></html>
